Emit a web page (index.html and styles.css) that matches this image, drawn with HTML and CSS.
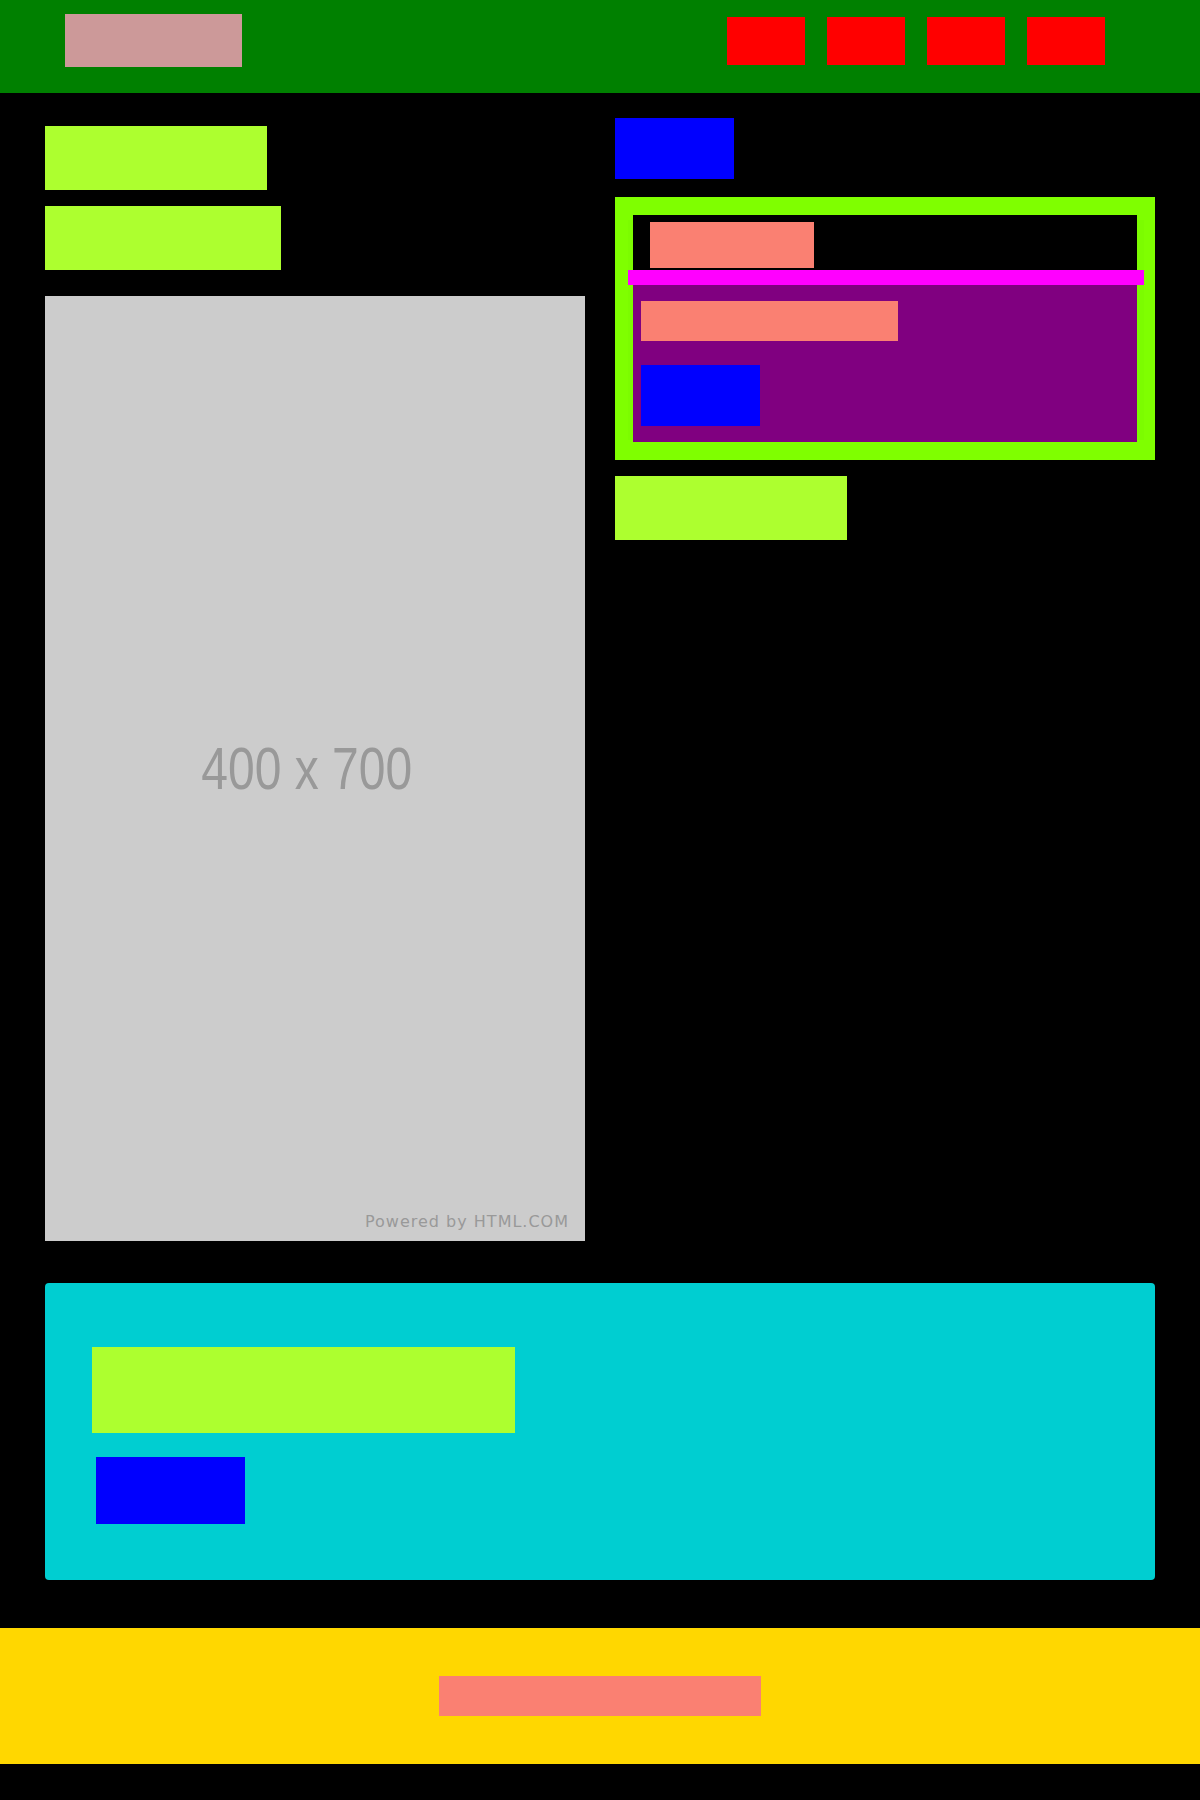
FILE: index.html
```html
<!DOCTYPE html>
<html>
<head>
    <title>Layout</title>
    <link rel="stylesheet" href="styles.css">
</head>
<body>
    <header class="site-header">
        <div class="logo"></div>
        <nav class="nav">
            <a class="nav-item"></a>
            <a class="nav-item"></a>
            <a class="nav-item"></a>
            <a class="nav-item"></a>
        </nav>
    </header>

    <main class="content">
        <section class="col col-left">
            <div class="tag tag-1"></div>
            <div class="tag tag-2"></div>
            <div class="placeholder">
                <div class="ph-size"><span class="ph-label">400 x 700</span></div>
                <div class="ph-credit">Powered by HTML.COM</div>
            </div>
        </section>

        <section class="col col-right">
            <div class="btn"></div>
            <div class="panel">
                <div class="panel-head">
                    <div class="panel-title"></div>
                </div>
                <div class="panel-rule"></div>
                <div class="panel-body">
                    <div class="panel-text"></div>
                    <div class="btn"></div>
                </div>
            </div>
            <div class="tag tag-3"></div>
        </section>
    </main>

    <section class="banner">
        <div class="banner-title"></div>
        <div class="btn btn-wide"></div>
    </section>

    <footer class="site-footer">
        <div class="footer-text"></div>
    </footer>
</body>
</html>
```

FILE: styles.css
```css
body {
    margin: 0;
    background-color: #000;
    font-family: "DejaVu Sans", sans-serif;
    height: 1800px;
}

.site-header {
    display: flex;
    justify-content: space-between;
    align-items: flex-start;
    height: 93px;
    padding: 0 95px 0 65px;
    background-color: #008000;
}

.logo {
    width: 177px;
    height: 53px;
    margin-top: 14px;
    background-color: #cc9999;
}

.nav {
    display: flex;
    gap: 22px;
    margin-top: 17px;
}

.nav-item {
    display: block;
    width: 78px;
    height: 48px;
    background-color: #ff0000;
}

.content {
    display: grid;
    grid-template-columns: 540px 540px;
    gap: 30px;
    padding: 25px 45px 0;
}

.col {
    display: flex;
    flex-direction: column;
    align-items: flex-start;
}

.col-left {
    padding-top: 8px;
}

.tag {
    height: 64px;
    background-color: #adff2f;
}

.tag-1 {
    width: 222px;
}

.tag-2 {
    width: 236px;
    margin-top: 16px;
}

.tag-3 {
    width: 232px;
    margin-top: 16px;
}

.placeholder {
    display: flex;
    flex-direction: column;
    width: 540px;
    height: 945px;
    margin-top: 26px;
    background-color: #cccccc;
}

.ph-size {
    flex: 1;
    display: flex;
    align-items: center;
    justify-content: center;
    padding: 29px 17px 0 0;
}

.ph-label {
    display: inline-block;
    font-family: "Liberation Sans", Arial, sans-serif;
    font-size: 60px;
    color: #999999;
    transform: scaleX(0.8);
}

.ph-credit {
    padding: 0 16px 10px 0;
    text-align: right;
    font-size: 16px;
    line-height: 19px;
    letter-spacing: 1px;
    color: #999999;
}

.btn {
    width: 119px;
    height: 61px;
    background-color: #0000ff;
}

.panel {
    position: relative;
    width: 504px;
    margin-top: 18px;
    border: 18px solid #7fff00;
    background-color: #000;
}

/* faint strip behind the panel content */
.panel::before {
    content: "";
    position: absolute;
    top: 5px;
    bottom: 2px;
    left: -5px;
    right: -7px;
    background-color: #7cfc00;
}

.panel-head {
    position: relative;
    height: 55px;
    padding: 7px 0 0 17px;
    box-sizing: border-box;
    background-color: #000;
}

.panel-title {
    width: 164px;
    height: 46px;
    background-color: #fa8072;
}

.panel-rule {
    position: relative;
    height: 15px;
    margin: 0 -7px 0 -5px;
    background-color: #ff00ff;
}

.panel-body {
    position: relative;
    padding: 16px 8px 16px;
    background-color: #800080;
}

.panel-text {
    width: 257px;
    height: 40px;
    margin-bottom: 24px;
    background-color: #fa8072;
}

.banner {
    margin: 42px 45px 0;
    padding: 64px 47px 56px;
    border-radius: 4px;
    background-color: #00ced1;
}

.banner-title {
    width: 423px;
    height: 86px;
    background-color: #adff2f;
}

.btn-wide {
    width: 149px;
    height: 67px;
    margin: 24px 0 0 4px;
}

.site-footer {
    display: flex;
    justify-content: center;
    margin-top: 48px;
    padding: 48px 0;
    background-color: #ffd700;
}

.footer-text {
    width: 322px;
    height: 40px;
    background-color: #fa8072;
}
```
